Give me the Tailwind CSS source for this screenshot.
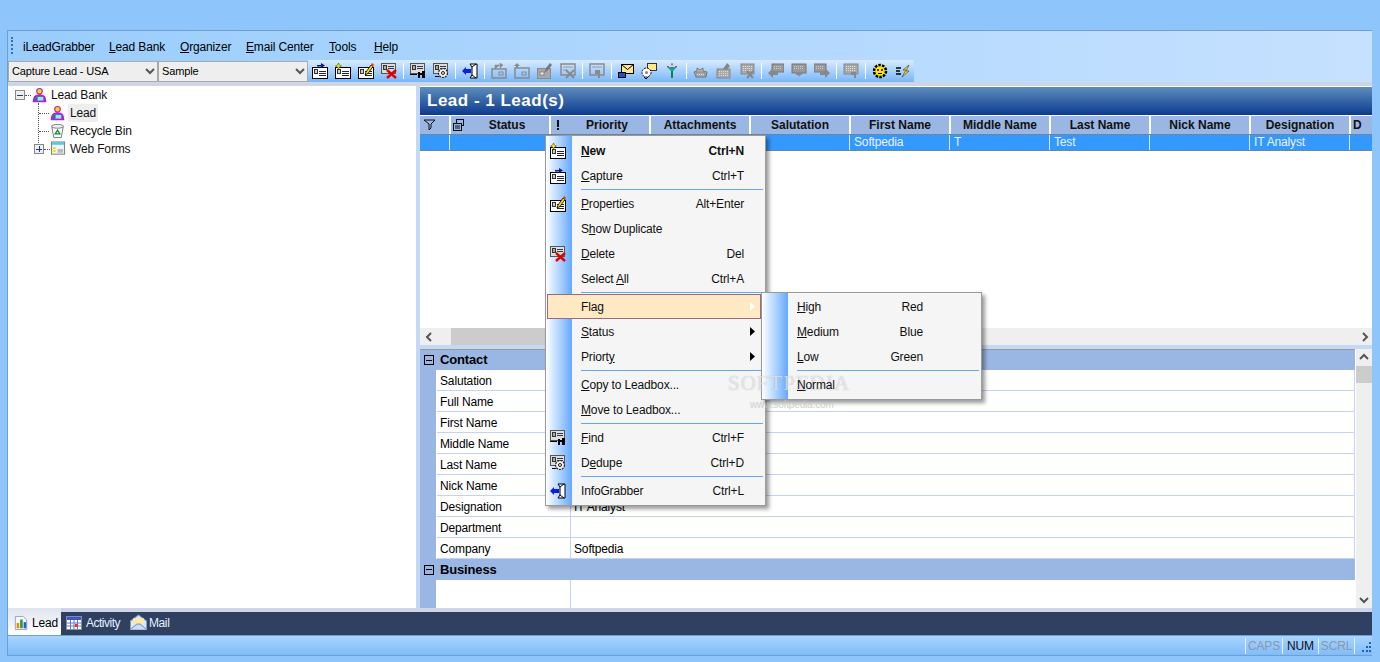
<!DOCTYPE html>
<html lang="en">
<head>
    <meta charset="UTF-8">
    <script src="https://cdn.jsdelivr.net/npm/@tailwindcss/browser@4"></script>
    <title>iLeadGrabber</title>
</head>
<body class="m-0 overflow-hidden">
<!-- shared icons -->
<svg class="hidden" width="0" height="0">
    <defs>
        <g id="card" shape-rendering="crispEdges">
            <rect x=".5" y="4.500" width="15" height="11" fill="#fff" stroke="#000"/>
            <rect x="2.500" y="6.500" width="3" height="4" fill="#ccc" stroke="#333"/>
            <path d="M7 8.500h7M7 10.500h7M7 12.500h7" stroke="#224" fill="none"/>
        </g>
        <g id="card2" shape-rendering="crispEdges">
            <rect x=".5" y=".5" width="14" height="10" fill="#ddd" stroke="#555"/>
            <rect x="2.500" y="2.500" width="3" height="4" fill="#aaa" stroke="#333"/>
            <path d="M7 3.500h6M7 5.500h6" stroke="#335"/>
        </g>
        <symbol id="i-new" viewBox="0 0 16 16"><use href="#card"/><path d="M3.500 0l1 2 2 1-2 1-1 2-1-2-2-1 2-1z" fill="#ffe600" stroke="#333" stroke-width=".5"/></symbol>
        <symbol id="i-capture" viewBox="0 0 16 16"><use href="#card"/><path d="M5 2h4V0l4 2.500L9 5V3.500H5z" fill="#14148c"/></symbol>
        <symbol id="i-props" viewBox="0 0 16 16"><use href="#card"/><path d="M7 12l1-3 5-7 2 1.500-5 7z" fill="#ffd800" stroke="#000" stroke-width=".8"/><path d="M13 2l1-2 2 1.500-1 2z" fill="#e33"/></symbol>
        <symbol id="i-del" viewBox="0 0 16 16"><use href="#card2"/><path d="M6 7l9 8M15 7l-9 8" stroke="#e00000" stroke-width="2.400"/></symbol>
        <symbol id="i-find" viewBox="0 0 16 16"><use href="#card2"/><path d="M0 11.500h7" stroke="#000"/><path d="M8 9h2v6H8zM12 8h3v7h-3zM10 10h2v2h-2z" fill="#000"/></symbol>
        <symbol id="i-dedupe" viewBox="0 0 16 16"><use href="#card2"/><circle cx="10" cy="10" r="4.500" fill="#eee" stroke="#222" stroke-width="1.200" stroke-dasharray="2 1"/><circle cx="10" cy="10" r="1.500" fill="none" stroke="#222"/><path d="M2 13.500h4" stroke="#000"/></symbol>
        <symbol id="i-info" viewBox="0 0 16 16"><path d="M8 1h7v14H8l2-3V4z" fill="#fff" stroke="#000"/><path d="M10 4l4-3M10 12l4 3" stroke="#000"/><path d="M0 8l4-4v2h5v4H4v2z" fill="#0a1ee6"/></symbol>
        <symbol id="i-a1" viewBox="0 0 16 16"><rect x="1" y="6" width="14" height="9" fill="none" stroke="#8a8a8a" stroke-width="1.500"/><rect x="8" y="9" width="4" height="3" fill="none" stroke="#8a8a8a"/><path d="M4 6V2h5M9 0l3 2-3 3z" fill="#8a8a8a" stroke="#8a8a8a" stroke-width=".5"/></symbol>
        <symbol id="i-a2" viewBox="0 0 16 16"><rect x="1" y="5" width="14" height="10" fill="none" stroke="#8a8a8a" stroke-width="1.500"/><rect x="8" y="9" width="4" height="3" fill="none" stroke="#8a8a8a"/><path d="M3 0L0 3h2v2h2V3h2z" fill="#8a8a8a"/></symbol>
        <symbol id="i-a3" viewBox="0 0 16 16"><rect x=".5" y="5.500" width="13" height="10" fill="#a8a8a8" stroke="#8a8a8a"/><rect x="3" y="9" width="4" height="3" fill="#eee" stroke="#888"/><path d="M7 10l2-5 4-5 2 2-4 5z" fill="#777"/></symbol>
        <symbol id="i-a4" viewBox="0 0 16 16"><rect x="1" y="1" width="14" height="11" fill="none" stroke="#8a8a8a" stroke-width="1.500"/><path d="M3 4h10M3 7h4" stroke="#999"/><path d="M6 7l8 8M14 7l-8 8" stroke="#8a8a8a" stroke-width="2"/></symbol>
        <symbol id="i-a5" viewBox="0 0 16 16"><rect x="1" y="1" width="14" height="11" fill="none" stroke="#8a8a8a" stroke-width="1.500"/><path d="M3 4h10" stroke="#999"/><path d="M6 7h5v8H9v-4H6z" fill="#8a8a8a"/></symbol>
        <symbol id="i-mail" viewBox="0 0 16 16"><rect x="3.500" y="1.500" width="12" height="9" fill="#ffe98a" stroke="#000"/><path d="M3.500 1.500l6 5 6-5" fill="none" stroke="#000"/><rect x=".5" y="9.500" width="7" height="5" fill="#1e50c8" stroke="#000"/></symbol>
        <symbol id="i-mail2" viewBox="0 0 16 16"><rect x="6.500" y=".5" width="9" height="7" fill="#ffe98a" stroke="#333"/><circle cx="5.500" cy="9.500" r="4.500" fill="#fff" stroke="#000" stroke-dasharray="2 1"/><circle cx="5.500" cy="9.500" r="1.500" fill="#888"/><path d="M3 14l2 2 2-2" fill="none" stroke="#000"/></symbol>
        <symbol id="i-filter" viewBox="0 0 16 16"><path d="M3 4h10L9 8H7z" fill="#14a0a0"/><path d="M7 8h2v7H7z" fill="#0a8a2e"/><path d="M7 1l1-1 1 1-1 2zM3 3h2v1H3zM11 3h2v1h-2z" fill="#e33"/></symbol>
        <symbol id="i-g1" viewBox="0 0 16 16"><path d="M1 9l3-1V5l3 2 3-2v3l4 1-1 5H3z" fill="#bbb" stroke="#777"/><rect x="3" y="9" width="9" height="5" fill="#a8a8a8" stroke="#888"/><path d="M4 11.500h7" stroke="#ddd" stroke-dasharray="1 1"/></symbol>
        <symbol id="i-g2" viewBox="0 0 16 16"><rect x="1" y="6" width="13" height="9" fill="#a8a8a8" stroke="#888"/><path d="M3 8.500h9M3 10.500h9M3 12.500h9" stroke="#ddd" stroke-dasharray="1 1"/><path d="M7 6l4-6 3 3-3 4z" fill="#888"/></symbol>
        <symbol id="i-g3" viewBox="0 0 16 16"><rect x="2" y="1" width="13" height="10" fill="#a8a8a8" stroke="#888"/><path d="M4 3.500h9M4 5.500h9M4 7.500h9" stroke="#ddd" stroke-dasharray="1 1"/><path d="M8 8l6 7M14 8l-6 7" stroke="#888" stroke-width="2"/></symbol>
        <symbol id="i-g4" viewBox="0 0 16 16"><rect x="4" y="1" width="12" height="8" fill="#999" stroke="#777"/><path d="M6 3.500h8M6 5.500h8" stroke="#ccc" stroke-dasharray="1 1"/><path d="M0 10l5-5v3h5v4H5v3z" fill="#888"/></symbol>
        <symbol id="i-g5" viewBox="0 0 16 16"><rect x="1" y="1" width="14" height="9" fill="#999" stroke="#777"/><path d="M3 3.500h10M3 5.500h10" stroke="#ccc" stroke-dasharray="1 1"/><path d="M5 10h6v2h-2l-1 2-1-2H5z" fill="#888"/></symbol>
        <symbol id="i-g6" viewBox="0 0 16 16"><rect x="0" y="1" width="12" height="8" fill="#999" stroke="#777"/><path d="M2 3.500h8M2 5.500h8" stroke="#ccc" stroke-dasharray="1 1"/><path d="M16 10l-5 5v-3H6V8h5V5z" fill="#888"/></symbol>
        <symbol id="i-g7" viewBox="0 0 16 16"><rect x="1" y="1" width="14" height="10" fill="#a8a8a8" stroke="#888"/><path d="M3 3.500h10M3 5.500h10M3 7.500h10" stroke="#ddd" stroke-dasharray="1 1"/><path d="M8 9h5v6h-2v-3H8z" fill="#888"/></symbol>
        <symbol id="i-gear" viewBox="0 0 16 16"><circle cx="8" cy="8" r="6" fill="#ffe600" stroke="#000" stroke-width="2.500" stroke-dasharray="2.500 1.200"/><circle cx="8" cy="8" r="3.500" fill="#ffe600"/><circle cx="6" cy="7" r="1" fill="#000"/><circle cx="10" cy="7" r="1" fill="#000"/><path d="M6 10.500h4" stroke="#000"/></symbol>
        <symbol id="i-flash" viewBox="0 0 16 16"><path d="M1 5h5M1 8h4M1 11h5" stroke="#000" stroke-width="1.300"/><path d="M14 2l-6 5h3l-4 7 7-6h-3z" fill="#ffe600" stroke="#333" stroke-width=".6"/></symbol>
        <symbol id="i-person" viewBox="0 0 16 16"><path d="M1.500 15c0-5 2-7 6.500-7s6.500 2 6.500 7z" fill="#0f8a8a" stroke="#e800e8" stroke-width="1.400"/><rect x="6" y="10" width="6" height="4" fill="#a8e0f8"/><circle cx="8" cy="4" r="3" fill="#f2e000" stroke="#c018c0" stroke-width="1.200"/></symbol>
        <symbol id="i-bin" viewBox="0 0 16 16"><path d="M2 4h12l-2 11H4z" fill="#fff" stroke="#777"/><ellipse cx="8" cy="3" rx="6.500" ry="2" fill="#eee" stroke="#777"/><path d="M8 7l2.500 4h-5z" fill="none" stroke="#0a8a2a" stroke-width="1.300"/></symbol>
        <symbol id="i-forms" viewBox="0 0 16 16"><rect x=".5" y=".5" width="14" height="13" fill="#f4f4f4" stroke="#777"/><rect x="1" y="1" width="13" height="2.500" fill="#3fd0ee"/><rect x="2" y="6" width="3" height="2" fill="#f0e000"/><rect x="2" y="9" width="3" height="2" fill="#f0e000"/><rect x="7" y="8" width="6" height="4" fill="#bbb"/></symbol>
        <symbol id="i-chart" viewBox="0 0 16 16"><path d="M1.500.5h9l4 4v11h-13z" fill="#f4f8ff" stroke="#99a"/><rect x="3" y="8" width="3" height="6" fill="#ee8a00"/><rect x="7" y="4" width="3" height="10" fill="#2a9a3a"/><rect x="11" y="7" width="3" height="7" fill="#2a5ad0"/></symbol>
        <symbol id="i-cal" viewBox="0 0 16 16"><rect x=".5" y="1.500" width="15" height="13" fill="#fff" stroke="#88a"/><rect x="1" y="2" width="14" height="3" fill="#3a5ac8"/><path d="M1 8h14M1 11h14M4.500 5v9M8 5v9M11.500 5v9" stroke="#5a78d0"/><rect x="9" y="9" width="3" height="3" fill="#e33"/></symbol>
        <symbol id="i-openmail" viewBox="0 0 16 16"><path d="M.5 6.500L8 1l7.500 5.500v8H.5z" fill="#dfe8f8" stroke="#7f9fd0"/><path d="M3 4h10v5l-5 3-5-3z" fill="#ffe9a0"/><path d="M.5 14.500l6-5h3l6 5" fill="#cfdcf4" stroke="#7f9fd0"/></symbol>
    </defs>
</svg>

<div class="relative w-[1380px] h-[662px] overflow-hidden bg-[#8ec5fb] pt-[30px] pl-[7px] pr-[8px] pb-[6px] font-['Liberation_Sans',Arial,sans-serif] text-[12px] tracking-[-.15px] text-black">
    <div class="flex flex-col h-full border-t border-l border-b border-[#6f9fd0]">

        <!-- menu and toolbar -->
        <div class="bg-gradient-to-r from-[#9acdfc] to-[#c6e1ff]">
            <div class="flex items-center h-[29px] pl-[3px]">
                <div class="w-[2px] h-[17px] border-l-2 border-dotted border-[#2a70c8]"></div>
                <div class="flex ml-[10px] pt-[2px]">
                    <span class="w-[86px]">iLeadGrabber</span>
                    <span class="w-[71px]"><u>L</u>ead Bank</span>
                    <span class="w-[66px]"><u>O</u>rganizer</span>
                    <span class="w-[83px]"><u>E</u>mail Center</span>
                    <span class="w-[45px]"><u>T</u>ools</span>
                    <span><u>H</u>elp</span>
                </div>
            </div>
            <div class="flex h-[22px]">
                <div class="flex items-center justify-between w-[150px] h-[21px] mt-px border border-[#aaa] bg-[#eeeeee] pl-[3px] pr-[2px]">
                    <span class="text-[11px]">Capture Lead - USA</span>
                    <svg width="10" height="8" viewBox="0 0 10 8"><path d="M1 1l4 4 4-4" fill="none" stroke="#555" stroke-width="2"/></svg>
                </div>
                <div class="flex items-center justify-between w-[150px] h-[21px] mt-px border border-[#aaa] bg-[#eeeeee] pl-[3px] pr-[2px]">
                    <span class="text-[11px]">Sample</span>
                    <svg width="10" height="8" viewBox="0 0 10 8"><path d="M1 1l4 4 4-4" fill="none" stroke="#555" stroke-width="2"/></svg>
                </div>
                <div class="flex items-center h-[22px] w-[606px] bg-gradient-to-b from-[#d8ebff] to-[#78b6f8]">
                    <span class="w-[23px] flex justify-center"><svg width="16" height="16"><use href="#i-capture"/></svg></span>
                    <span class="w-[23px] flex justify-center"><svg width="16" height="16"><use href="#i-new"/></svg></span>
                    <span class="w-[23px] flex justify-center"><svg width="16" height="16"><use href="#i-props"/></svg></span>
                    <span class="w-[23px] flex justify-center"><svg width="16" height="16"><use href="#i-del"/></svg></span>
                    <span class="w-[6px] flex justify-center"><i class="w-px h-[16px] bg-white"></i></span>
                    <span class="w-[23px] flex justify-center"><svg width="16" height="16"><use href="#i-find"/></svg></span>
                    <span class="w-[23px] flex justify-center"><svg width="16" height="16"><use href="#i-dedupe"/></svg></span>
                    <span class="w-[6px] flex justify-center"><i class="w-px h-[16px] bg-white"></i></span>
                    <span class="w-[23px] flex justify-center"><svg width="16" height="16"><use href="#i-info"/></svg></span>
                    <span class="w-[6px] flex justify-center"><i class="w-px h-[16px] bg-white"></i></span>
                    <span class="w-[23px] flex justify-center"><svg width="16" height="16"><use href="#i-a1"/></svg></span>
                    <span class="w-[23px] flex justify-center"><svg width="16" height="16"><use href="#i-a2"/></svg></span>
                    <span class="w-[23px] flex justify-center"><svg width="16" height="16"><use href="#i-a3"/></svg></span>
                    <span class="w-[23px] flex justify-center"><svg width="16" height="16"><use href="#i-a4"/></svg></span>
                    <span class="w-[6px] flex justify-center"><i class="w-px h-[16px] bg-white"></i></span>
                    <span class="w-[23px] flex justify-center"><svg width="16" height="16"><use href="#i-a5"/></svg></span>
                    <span class="w-[6px] flex justify-center"><i class="w-px h-[16px] bg-white"></i></span>
                    <span class="w-[23px] flex justify-center"><svg width="16" height="16"><use href="#i-mail"/></svg></span>
                    <span class="w-[23px] flex justify-center"><svg width="16" height="16"><use href="#i-mail2"/></svg></span>
                    <span class="w-[23px] flex justify-center"><svg width="16" height="16"><use href="#i-filter"/></svg></span>
                    <span class="w-[6px] flex justify-center"><i class="w-px h-[16px] bg-white"></i></span>
                    <span class="w-[23px] flex justify-center"><svg width="16" height="16"><use href="#i-g1"/></svg></span>
                    <span class="w-[23px] flex justify-center"><svg width="16" height="16"><use href="#i-g2"/></svg></span>
                    <span class="w-[23px] flex justify-center"><svg width="16" height="16"><use href="#i-g3"/></svg></span>
                    <span class="w-[6px] flex justify-center"><i class="w-px h-[16px] bg-white"></i></span>
                    <span class="w-[23px] flex justify-center"><svg width="16" height="16"><use href="#i-g4"/></svg></span>
                    <span class="w-[23px] flex justify-center"><svg width="16" height="16"><use href="#i-g5"/></svg></span>
                    <span class="w-[23px] flex justify-center"><svg width="16" height="16"><use href="#i-g6"/></svg></span>
                    <span class="w-[6px] flex justify-center"><i class="w-px h-[16px] bg-white"></i></span>
                    <span class="w-[23px] flex justify-center"><svg width="16" height="16"><use href="#i-g7"/></svg></span>
                    <span class="w-[6px] flex justify-center"><i class="w-px h-[16px] bg-white"></i></span>
                    <span class="w-[23px] flex justify-center"><svg width="16" height="16"><use href="#i-gear"/></svg></span>
                    <span class="w-[23px] flex justify-center"><svg width="16" height="16"><use href="#i-flash"/></svg></span>
                </div>
            </div>
        </div>

        <!-- panes -->
        <div class="flex h-[526px] bg-[#cdd6e6] pt-[4px]">
            <div class="relative w-[408px] h-[522px] bg-white text-[#111]">
                <div class="absolute left-[30px] top-[17px] h-[42px] border-l border-dotted border-[#555]"></div>
                <div class="flex items-center h-[18px] pl-[7px]">
                    <span class="flex items-center justify-center w-[10px] h-[10px] border border-[#888] bg-[#eee]"><i class="w-[6px] h-px bg-[#223a8a]"></i></span>
                    <i class="w-[6px] border-t border-dotted border-[#555]"></i>
                    <svg class="ml-px" width="15" height="16"><use href="#i-person"/></svg>
                    <span class="ml-[4px]">Lead Bank</span>
                </div>
                <div class="flex items-center h-[18px] pl-[31px]">
                    <i class="w-[10px] border-t border-dotted border-[#555]"></i>
                    <svg class="ml-px" width="15" height="16"><use href="#i-person"/></svg>
                    <span class="ml-[3px] px-[2px] h-[18px] leading-[18px] bg-[#eeeeee]">Lead</span>
                </div>
                <div class="flex items-center h-[18px] pl-[31px]">
                    <i class="w-[10px] border-t border-dotted border-[#555]"></i>
                    <svg class="ml-px" width="15" height="16"><use href="#i-bin"/></svg>
                    <span class="ml-[5px]">Recycle Bin</span>
                </div>
                <div class="flex items-center h-[18px] pl-[26px]">
                    <span class="relative flex items-center justify-center w-[10px] h-[10px] border border-[#888] bg-[#eee]"><i class="w-[6px] h-px bg-[#223a8a]"></i><i class="absolute w-px h-[6px] bg-[#223a8a]"></i></span>
                    <i class="w-[6px] border-t border-dotted border-[#555]"></i>
                    <svg class="ml-px" width="15" height="16"><use href="#i-forms"/></svg>
                    <span class="ml-[4px]">Web Forms</span>
                </div>
            </div>

            <div class="w-[4px] bg-[#c4d9f8]"></div>

            <div class="flex flex-col w-[952px] h-[522px] bg-white">
                <div class="h-[28px] mt-px pl-[7px] flex items-center bg-gradient-to-b from-[#5f8cbc] to-[#0a3a8e] text-white text-[17px] font-bold tracking-[.5px]">Lead - 1 Lead(s)</div>
                <div class="flex h-[18px] mt-px bg-[#9ab6e2] font-bold text-[#111] tracking-normal overflow-hidden">
                    <span class="w-[31px] shrink-0 border-r-2 border-white pl-[3px] flex items-center"><svg width="14" height="14" viewBox="0 0 14 14"><path d="M1 2h11L8 6v4L6 12V6z" fill="none" stroke="#111"/></svg></span>
                    <span class="w-[100px] shrink-0 border-r-2 border-white relative text-center leading-[18px] pl-[14px]"><svg class="absolute left-[1px] top-[2px]" width="14" height="14" viewBox="0 0 14 14"><rect x="4.500" y="1.500" width="7" height="6" fill="none" stroke="#111"/><rect x="1.500" y="5.500" width="8" height="7" fill="#9ab6e2" stroke="#111"/><path d="M3 8h5M3 10h5" stroke="#111"/></svg>Status</span>
                    <span class="w-[100px] shrink-0 border-r-2 border-white relative text-center leading-[18px] pl-[14px]"><i class="absolute left-[6px] top-[4px] w-[2px] h-[7px] bg-[#111]"></i><i class="absolute left-[6px] top-[12px] w-[2px] h-[2px] bg-[#111]"></i>Priority</span>
                    <span class="w-[100px] shrink-0 border-r-2 border-white text-center leading-[18px]">Attachments</span>
                    <span class="w-[100px] shrink-0 border-r-2 border-white text-center leading-[18px]">Salutation</span>
                    <span class="w-[100px] shrink-0 border-r-2 border-white text-center leading-[18px]">First Name</span>
                    <span class="w-[100px] shrink-0 border-r-2 border-white text-center leading-[18px]">Middle Name</span>
                    <span class="w-[100px] shrink-0 border-r-2 border-white text-center leading-[18px]">Last Name</span>
                    <span class="w-[100px] shrink-0 border-r-2 border-white text-center leading-[18px]">Nick Name</span>
                    <span class="w-[100px] shrink-0 border-r-2 border-white text-center leading-[18px]">Designation</span>
                    <span class="pl-[2px] leading-[18px]">D</span>
                </div>
                <div class="flex h-[17px] bg-[#3399ff] text-[#eaf4ff] border-y border-dotted border-[#a8723c] overflow-hidden leading-[15px]">
                    <span class="w-[30px] shrink-0 border-r border-[#d8ebff]"></span>
                    <span class="w-[100px] shrink-0"></span>
                    <span class="w-[100px] shrink-0"></span>
                    <span class="w-[100px] shrink-0"></span>
                    <span class="w-[100px] shrink-0 border-r border-[#d8ebff]"></span>
                    <span class="w-[100px] shrink-0 pl-[4px] border-r border-[#d8ebff]">Softpedia</span>
                    <span class="w-[100px] shrink-0 pl-[4px] border-r border-[#d8ebff]">T</span>
                    <span class="w-[100px] shrink-0 pl-[4px] border-r border-[#d8ebff]">Test</span>
                    <span class="w-[100px] shrink-0 pl-[4px] border-r border-[#d8ebff]"></span>
                    <span class="w-[100px] shrink-0 pl-[4px] border-r border-[#d8ebff]">IT Analyst</span>
                </div>
                <div class="flex-1"></div>
                <div class="flex h-[17px] bg-[#efefef]">
                    <span class="w-[17px] flex items-center justify-center"><svg width="9" height="10" viewBox="0 0 9 10"><path d="M7 1L3 5l4 4" fill="none" stroke="#555" stroke-width="2"/></svg></span>
                    <span class="w-[14px]"></span>
                    <span class="w-[305px] bg-[#cccccc]"></span>
                    <span class="flex-1"></span>
                    <span class="w-[14px] flex items-center justify-center"><svg width="9" height="10" viewBox="0 0 9 10"><path d="M2 1l4 4-4 4" fill="none" stroke="#555" stroke-width="2"/></svg></span>
                </div>
                <div class="h-[4px] bg-[#c4d9f8]"></div>

                <!-- property grid -->
                <div class="flex h-[259px] overflow-hidden">
                    <div class="flex flex-col w-[935px] overflow-hidden border-t border-[#999]">
                        <div class="flex h-[20px] shrink-0 bg-[#9ab6e2] font-bold text-[13px] items-center">
                            <span class="w-[17px] flex justify-center"><span class="flex items-center justify-center w-[10px] h-[10px] border border-black"><i class="w-[6px] h-px bg-black"></i></span></span>
                            <span class="pl-[3px]">Contact</span>
                        </div>
                        <div class="flex h-[21px] shrink-0"><span class="w-[16px] bg-[#9ab6e2]"></span><span class="w-[134px] pl-[3px] border-b border-r border-[#c4d3f3] leading-[22px] ml-px">Salutation</span><span class="flex-1 pl-[3px] border-b border-[#c4d3f3] border-r leading-[22px]"></span></div>
                        <div class="flex h-[21px] shrink-0"><span class="w-[16px] bg-[#9ab6e2]"></span><span class="w-[134px] pl-[3px] border-b border-r border-[#c4d3f3] leading-[22px] ml-px">Full Name</span><span class="flex-1 pl-[3px] border-b border-[#c4d3f3] border-r leading-[22px]"></span></div>
                        <div class="flex h-[21px] shrink-0"><span class="w-[16px] bg-[#9ab6e2]"></span><span class="w-[134px] pl-[3px] border-b border-r border-[#c4d3f3] leading-[22px] ml-px">First Name</span><span class="flex-1 pl-[3px] border-b border-[#c4d3f3] border-r leading-[22px]">Softpedia</span></div>
                        <div class="flex h-[21px] shrink-0"><span class="w-[16px] bg-[#9ab6e2]"></span><span class="w-[134px] pl-[3px] border-b border-r border-[#c4d3f3] leading-[22px] ml-px">Middle Name</span><span class="flex-1 pl-[3px] border-b border-[#c4d3f3] border-r leading-[22px]">T</span></div>
                        <div class="flex h-[21px] shrink-0"><span class="w-[16px] bg-[#9ab6e2]"></span><span class="w-[134px] pl-[3px] border-b border-r border-[#c4d3f3] leading-[22px] ml-px">Last Name</span><span class="flex-1 pl-[3px] border-b border-[#c4d3f3] border-r leading-[22px]">Test</span></div>
                        <div class="flex h-[21px] shrink-0"><span class="w-[16px] bg-[#9ab6e2]"></span><span class="w-[134px] pl-[3px] border-b border-r border-[#c4d3f3] leading-[22px] ml-px">Nick Name</span><span class="flex-1 pl-[3px] border-b border-[#c4d3f3] border-r leading-[22px]"></span></div>
                        <div class="flex h-[21px] shrink-0"><span class="w-[16px] bg-[#9ab6e2]"></span><span class="w-[134px] pl-[3px] border-b border-r border-[#c4d3f3] leading-[22px] ml-px">Designation</span><span class="flex-1 pl-[3px] border-b border-[#c4d3f3] border-r leading-[22px]">IT Analyst</span></div>
                        <div class="flex h-[21px] shrink-0"><span class="w-[16px] bg-[#9ab6e2]"></span><span class="w-[134px] pl-[3px] border-b border-r border-[#c4d3f3] leading-[22px] ml-px">Department</span><span class="flex-1 pl-[3px] border-b border-[#c4d3f3] border-r leading-[22px]"></span></div>
                        <div class="flex h-[21px] shrink-0"><span class="w-[16px] bg-[#9ab6e2]"></span><span class="w-[134px] pl-[3px] border-b border-r border-[#c4d3f3] leading-[22px] ml-px">Company</span><span class="flex-1 pl-[3px] border-b border-[#c4d3f3] border-r leading-[22px]">Softpedia</span></div>
                        <div class="flex h-[21px] shrink-0 bg-[#9ab6e2] font-bold text-[13px] items-center">
                            <span class="w-[17px] flex justify-center"><span class="flex items-center justify-center w-[10px] h-[10px] border border-black"><i class="w-[6px] h-px bg-black"></i></span></span>
                            <span class="pl-[3px]">Business</span>
                        </div>
                        <div class="flex flex-1"><span class="w-[16px] bg-[#9ab6e2]"></span><span class="w-[134px] border-r border-[#c4d3f3] ml-px"></span></div>
                    </div>
                    <div class="flex flex-col w-[17px] ml-auto bg-[#efefef] border-l border-white">
                        <span class="h-[17px] flex items-center justify-center"><svg width="10" height="9" viewBox="0 0 10 9"><path d="M1 6l4-4 4 4" fill="none" stroke="#555" stroke-width="2"/></svg></span>
                        <span class="h-[17px] bg-[#cccccc]"></span>
                        <span class="flex-1"></span>
                        <span class="h-[17px] flex items-center justify-center"><svg width="10" height="9" viewBox="0 0 10 9"><path d="M1 3l4 4 4-4" fill="none" stroke="#555" stroke-width="2"/></svg></span>
                    </div>
                </div>
            </div>
        </div>

        <!-- tabs -->
        <div class="flex h-[27px] bg-[#cdd6e6]">
            <div class="flex items-center w-[53px] pl-[6px] gap-[4px] pt-[3px] bg-gradient-to-b from-[#dfe4ee] to-white rounded-b-[2px]">
                <svg width="14" height="16"><use href="#i-chart"/></svg><span>Lead</span>
            </div>
            <div class="flex flex-1 items-center mt-[4px] pb-[2px] bg-[#2f4060] text-[#e8f0ff]">
                <svg class="ml-[5px]" width="16" height="16"><use href="#i-cal"/></svg><span class="ml-[4px] w-[44px] tracking-[-.5px]">Activity</span>
                <svg width="17" height="17"><use href="#i-openmail"/></svg><span class="ml-[2px] tracking-[-.4px]">Mail</span>
            </div>
        </div>

        <!-- status bar -->
        <div class="flex flex-1 items-center justify-end bg-gradient-to-b from-[#a8d4ff] to-[#7fbcf9] border-t border-[#6f9fd0] text-[#111]">
            <span class="w-[38px] text-center border-x border-[#e4f1ff] h-[16px] leading-[16px] text-[#8a98a8]">CAPS</span>
            <span class="w-[36px] text-center border-r border-[#e4f1ff] h-[16px] leading-[16px]">NUM</span>
            <span class="w-[36px] text-center border-r border-[#e4f1ff] h-[16px] leading-[16px] text-[#8a98a8]">SCRL</span>
            <svg class="ml-[5px] mt-[3px]" width="12" height="12" viewBox="0 0 12 12"><path d="M9 1h2v2H9zM6 5h2v2H6zM9 5h2v2H9zM2 9h2v2H2zM6 9h2v2H6zM9 9h2v2H9z" fill="#1f5fc0"/></svg>
        </div>
    </div>

    <!-- context menu -->
    <div class="absolute left-[545px] top-[135px] w-[221px] h-[371px] bg-[#f5f5f5] border border-[#9a9a9a] shadow-[3px_3px_4px_rgba(0,0,0,.4)] text-[#111] pt-[2px]">
        <div class="absolute left-0 top-0 bottom-0 w-[26px] bg-gradient-to-r from-white to-[#62a8fb]"></div>
        <div class="relative flex items-center h-[25px] font-bold"><svg class="ml-[4px]" width="16" height="16"><use href="#i-new"/></svg><span class="ml-[15px] flex-1"><u>N</u>ew</span><span class="mr-[21px]">Ctrl+N</span></div>
        <div class="relative flex items-center h-[25px]"><svg class="ml-[4px]" width="16" height="16"><use href="#i-capture"/></svg><span class="ml-[15px] flex-1"><u>C</u>apture</span><span class="mr-[21px]">Ctrl+T</span></div>
        <div class="relative h-[3px] pt-px pl-[35px] pr-[2px]"><i class="block h-px bg-[#62a8ee]"></i></div>
        <div class="relative flex items-center h-[25px]"><svg class="ml-[4px]" width="16" height="16"><use href="#i-props"/></svg><span class="ml-[15px] flex-1"><u>P</u>roperties</span><span class="mr-[21px]">Alt+Enter</span></div>
        <div class="relative flex items-center h-[25px] pl-[35px]"><span>S<u>h</u>ow Duplicate</span></div>
        <div class="relative flex items-center h-[25px]"><svg class="ml-[4px]" width="16" height="16"><use href="#i-del"/></svg><span class="ml-[15px] flex-1"><u>D</u>elete</span><span class="mr-[21px]">Del</span></div>
        <div class="relative flex items-center h-[25px] pl-[35px]"><span class="flex-1">Select <u>A</u>ll</span><span class="mr-[21px]">Ctrl+A</span></div>
        <div class="relative h-[3px] pt-px pl-[35px] pr-[2px]"><i class="block h-px bg-[#62a8ee]"></i></div>
        <div class="relative flex items-center h-[25px] ml-px mr-[4px] pl-[33px] bg-[#ffe9c4] border border-[#a0687c]"><span class="flex-1">Fla<u>g</u></span><svg class="mr-[5px]" width="5" height="9"><path d="M0 0l5 4.500L0 9z" fill="#fff"/></svg></div>
        <div class="relative flex items-center h-[25px] pl-[35px]"><span class="flex-1"><u>S</u>tatus</span><svg class="mr-[10px]" width="5" height="9"><path d="M0 0l5 4.500L0 9z" fill="#000"/></svg></div>
        <div class="relative flex items-center h-[25px] pl-[35px]"><span class="flex-1">Priort<u>y</u></span><svg class="mr-[10px]" width="5" height="9"><path d="M0 0l5 4.500L0 9z" fill="#000"/></svg></div>
        <div class="relative h-[3px] pt-px pl-[35px] pr-[2px]"><i class="block h-px bg-[#62a8ee]"></i></div>
        <div class="relative flex items-center h-[25px] pl-[35px]"><span><u>C</u>opy to Leadbox...</span></div>
        <div class="relative flex items-center h-[25px] pl-[35px]"><span><u>M</u>ove to Leadbox...</span></div>
        <div class="relative h-[3px] pt-px pl-[35px] pr-[2px]"><i class="block h-px bg-[#62a8ee]"></i></div>
        <div class="relative flex items-center h-[25px]"><svg class="ml-[4px]" width="16" height="16"><use href="#i-find"/></svg><span class="ml-[15px] flex-1"><u>F</u>ind</span><span class="mr-[21px]">Ctrl+F</span></div>
        <div class="relative flex items-center h-[25px]"><svg class="ml-[4px]" width="16" height="16"><use href="#i-dedupe"/></svg><span class="ml-[15px] flex-1">D<u>e</u>dupe</span><span class="mr-[21px]">Ctrl+D</span></div>
        <div class="relative h-[3px] pt-px pl-[35px] pr-[2px]"><i class="block h-px bg-[#62a8ee]"></i></div>
        <div class="relative flex items-center h-[25px]"><svg class="ml-[4px]" width="16" height="16"><use href="#i-info"/></svg><span class="ml-[15px] flex-1">InfoGrabber</span><span class="mr-[21px]">Ctrl+L</span></div>
    </div>

    <!-- flag submenu -->
    <div class="absolute left-[761px] top-[292px] w-[221px] h-[108px] bg-[#f5f5f5] border border-[#9a9a9a] shadow-[3px_3px_4px_rgba(0,0,0,.4)] text-[#111] pt-[1px]">
        <div class="absolute left-0 top-0 bottom-0 w-[26px] bg-gradient-to-r from-white to-[#62a8fb]"></div>
        <div class="relative flex items-center h-[25px] pl-[35px]"><span class="flex-1"><u>H</u>igh</span><span class="mr-[58px]">Red</span></div>
        <div class="relative flex items-center h-[25px] pl-[35px]"><span class="flex-1"><u>M</u>edium</span><span class="mr-[58px]">Blue</span></div>
        <div class="relative flex items-center h-[25px] pl-[35px]"><span class="flex-1"><u>L</u>ow</span><span class="mr-[58px]">Green</span></div>
        <div class="relative h-[3px] pt-px pl-[35px] pr-[2px]"><i class="block h-px bg-[#62a8ee]"></i></div>
        <div class="relative flex items-center h-[25px] pl-[35px]"><span class="relative z-10"><u>N</u>ormal</span></div>
    </div>

    <!-- watermark -->
    <div class="absolute left-[728px] top-[368px] pointer-events-none font-['Liberation_Serif',serif] text-[21px] tracking-[1px] text-white/60 [text-shadow:0_0_1px_rgba(120,120,120,.5)]">SOFTPEDIA</div>
    <div class="absolute left-[750px] top-[397px] pointer-events-none text-[10px] text-[#c4c4c4]/80">www.softpedia.com</div>
</div>
</body>
</html>
